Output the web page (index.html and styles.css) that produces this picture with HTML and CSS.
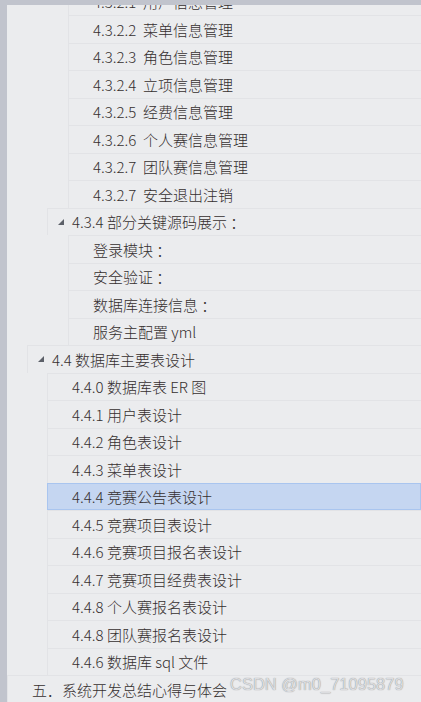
FILE: index.html
```html
<!DOCTYPE html>
<html lang="zh-CN">
<head>
    <meta charset="UTF-8">
    <title>导航窗格</title>
    <link rel="stylesheet" href="styles.css">
</head>
<body>
    <div class="frame">
        <div class="pane">
            <!-- Document outline tree -->
            <ul class="tree">
                <li class="row lv4">4.3.2.1&nbsp; 用户信息管理</li>
                <li class="row lv4">4.3.2.2&nbsp; 菜单信息管理</li>
                <li class="row lv4">4.3.2.3&nbsp; 角色信息管理</li>
                <li class="row lv4">4.3.2.4&nbsp; 立项信息管理</li>
                <li class="row lv4">4.3.2.5&nbsp; 经费信息管理</li>
                <li class="row lv4">4.3.2.6&nbsp; 个人赛信息管理</li>
                <li class="row lv4">4.3.2.7&nbsp; 团队赛信息管理</li>
                <li class="row lv4">4.3.2.7&nbsp; 安全退出注销</li>
                <li class="row lv3 open"><svg class="arrow" width="6" height="6" viewBox="0 0 6 6"><polygon points="6,0 6,6 0,6"/></svg>4.3.4 部分关键源码展示 ：</li>
                <li class="row lv4">登录模块 ：</li>
                <li class="row lv4">安全验证 ：</li>
                <li class="row lv4">数据库连接信息 ：</li>
                <li class="row lv4">服务主配置 yml</li>
                <li class="row lv2 open"><svg class="arrow" width="6" height="6" viewBox="0 0 6 6"><polygon points="6,0 6,6 0,6"/></svg>4.4 数据库主要表设计</li>
                <li class="row lv3">4.4.0 数据库表 ER 图</li>
                <li class="row lv3">4.4.1 用户表设计</li>
                <li class="row lv3">4.4.2 角色表设计</li>
                <li class="row lv3">4.4.3 菜单表设计</li>
                <li class="row lv3 selected">4.4.4 竞赛公告表设计</li>
                <li class="row lv3">4.4.5 竞赛项目表设计</li>
                <li class="row lv3">4.4.6 竞赛项目报名表设计</li>
                <li class="row lv3">4.4.7 竞赛项目经费表设计</li>
                <li class="row lv3">4.4.8 个人赛报名表设计</li>
                <li class="row lv3">4.4.8 团队赛报名表设计</li>
                <li class="row lv3">4.4.6 数据库 sql 文件</li>
                <li class="row lv1">五．系统开发总结心得与体会</li>
            </ul>
        </div>
        <div class="watermark">CSDN @m0_71095879</div>
    </div>
</body>
</html>
```

FILE: styles.css
```css
body {
    margin: 0;
    font-family: "Noto Sans CJK SC", "Liberation Sans", sans-serif;
}

.frame {
    position: relative;
    height: 702px;
    box-sizing: border-box;
    padding: 5px 0 0 7px;
    background: #c1c4cd;
    overflow: hidden;
}

.pane {
    height: 100%;
    background: #ebecee;
    overflow: hidden;
}

.tree {
    list-style: none;
    margin: -17.5px 0 0 0;
    padding: 0;
}

.row {
    display: flex;
    align-items: center;
    height: 27.5px;
    box-sizing: border-box;
    padding-left: 24px;
    border-top: 1px solid #e2e3e6;
    border-left: 1px solid #e2e3e6;
    font-size: 15px;
    font-weight: 300;
    color: #352f2f;
    white-space: nowrap;
}

/* indent per outline level */
.lv1 { margin-left: 0; }
.lv2 { margin-left: 20px; }
.lv3 { margin-left: 40px; }
.lv4 { margin-left: 61px; }

.open {
    padding-left: 10px;
}
.arrow {
    fill: #5c6068;
    margin-right: 8px;
    flex: none;
}

.selected {
    background: #c5d6f1;
    border: 1px solid #a9c5ef;
}

.watermark {
    position: absolute;
    left: 230px;
    bottom: 8px;
    font-family: "Liberation Sans", sans-serif;
    font-size: 16.5px;
    color: #dcdde0;
    text-shadow: 0 0 1px #7d7d7d;
}
```
